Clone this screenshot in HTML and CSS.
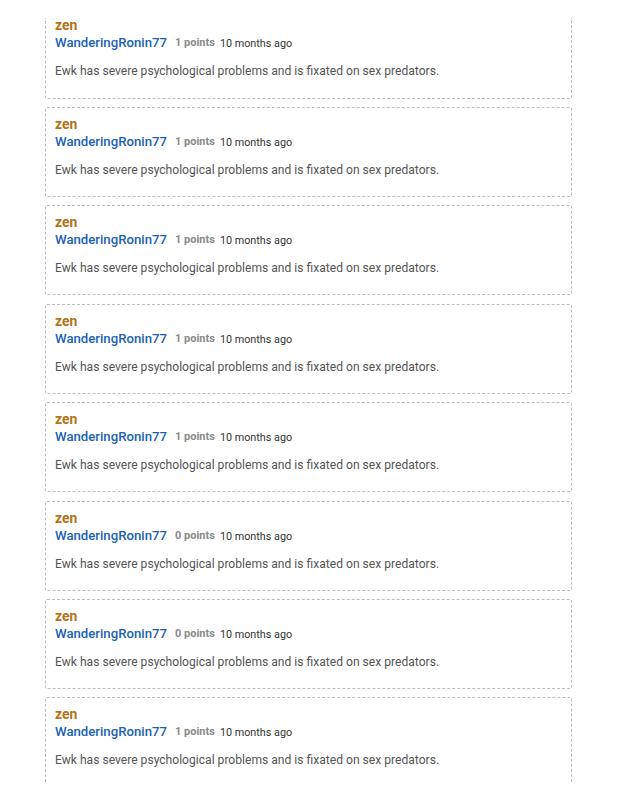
FILE: index.html
```html
<!DOCTYPE html>
<html lang="en">
<head>
    <meta charset="UTF-8" />
    <meta name="viewport" content="width=device-width, initial-scale=1.0" />
    <title>Comments</title>
    <link rel="stylesheet" href="styles.css">
</head>
<body>
    <div class="comment-list">
        <div class="comment cut-top">
            <div class="thread">zen</div>
            <div class="meta">
                <span class="author">WanderingRonin77</span>
                <span class="points">1 points</span>
                <span class="time">10 months ago</span>
            </div>
            <p class="body">Ewk has severe psychological problems and is fixated on sex predators.</p>
        </div>

        <div class="comment">
            <div class="thread">zen</div>
            <div class="meta">
                <span class="author">WanderingRonin77</span>
                <span class="points">1 points</span>
                <span class="time">10 months ago</span>
            </div>
            <p class="body">Ewk has severe psychological problems and is fixated on sex predators.</p>
        </div>

        <div class="comment">
            <div class="thread">zen</div>
            <div class="meta">
                <span class="author">WanderingRonin77</span>
                <span class="points">1 points</span>
                <span class="time">10 months ago</span>
            </div>
            <p class="body">Ewk has severe psychological problems and is fixated on sex predators.</p>
        </div>

        <div class="comment">
            <div class="thread">zen</div>
            <div class="meta">
                <span class="author">WanderingRonin77</span>
                <span class="points">1 points</span>
                <span class="time">10 months ago</span>
            </div>
            <p class="body">Ewk has severe psychological problems and is fixated on sex predators.</p>
        </div>

        <div class="comment">
            <div class="thread">zen</div>
            <div class="meta">
                <span class="author">WanderingRonin77</span>
                <span class="points">1 points</span>
                <span class="time">10 months ago</span>
            </div>
            <p class="body">Ewk has severe psychological problems and is fixated on sex predators.</p>
        </div>

        <div class="comment">
            <div class="thread">zen</div>
            <div class="meta">
                <span class="author">WanderingRonin77</span>
                <span class="points">0 points</span>
                <span class="time">10 months ago</span>
            </div>
            <p class="body">Ewk has severe psychological problems and is fixated on sex predators.</p>
        </div>

        <div class="comment">
            <div class="thread">zen</div>
            <div class="meta">
                <span class="author">WanderingRonin77</span>
                <span class="points">0 points</span>
                <span class="time">10 months ago</span>
            </div>
            <p class="body">Ewk has severe psychological problems and is fixated on sex predators.</p>
        </div>

        <div class="comment cut-bottom">
            <div class="thread">zen</div>
            <div class="meta">
                <span class="author">WanderingRonin77</span>
                <span class="points">1 points</span>
                <span class="time">10 months ago</span>
            </div>
            <p class="body">Ewk has severe psychological problems and is fixated on sex predators.</p>
        </div>
    </div>
</body>
</html>
```

FILE: styles.css
```css
body {
    margin: 0;
    padding: 0;
    background: #ffffff;
    font-family: Roboto, "Liberation Sans", sans-serif;
    overflow: hidden;
}

.comment-list {
    display: flex;
    flex-direction: column;
    gap: 8.4px;
    width: 527px;
    margin-left: 45px;
    padding-top: 18px;
}

.comment {
    height: 90px;
    box-sizing: border-box;
    border: 1px dashed #bdbdbd;
    border-radius: 2px;
    padding: 7px 9px 0;
}

.comment.cut-top {
    height: 80.6px;
    border-top: none;
    border-radius: 0 0 2px 2px;
    padding-top: 0;
}

.comment.cut-top .thread {
    margin-top: -2px;
}

.comment.cut-bottom {
    height: 85px;
    border-bottom: none;
    border-radius: 2px 2px 0 0;
}

.thread {
    font-size: 14px;
    font-weight: 700;
    color: #b5731a;
    line-height: 18px;
}

.meta {
    display: flex;
    align-items: baseline;
    line-height: 18px;
}

.author {
    font-size: 13.2px;
    font-weight: 500;
    color: #1a62b5;
}

.points {
    font-size: 11px;
    font-weight: 700;
    color: #8a8a8a;
    margin-left: 8px;
    position: relative;
    top: -1px;
}

.time {
    font-size: 10.8px;
    color: #333;
    margin-left: 5px;
}

.body {
    margin: 9px 0 0;
    font-size: 12.1px;
    color: #555;
    line-height: 18px;
}
```
